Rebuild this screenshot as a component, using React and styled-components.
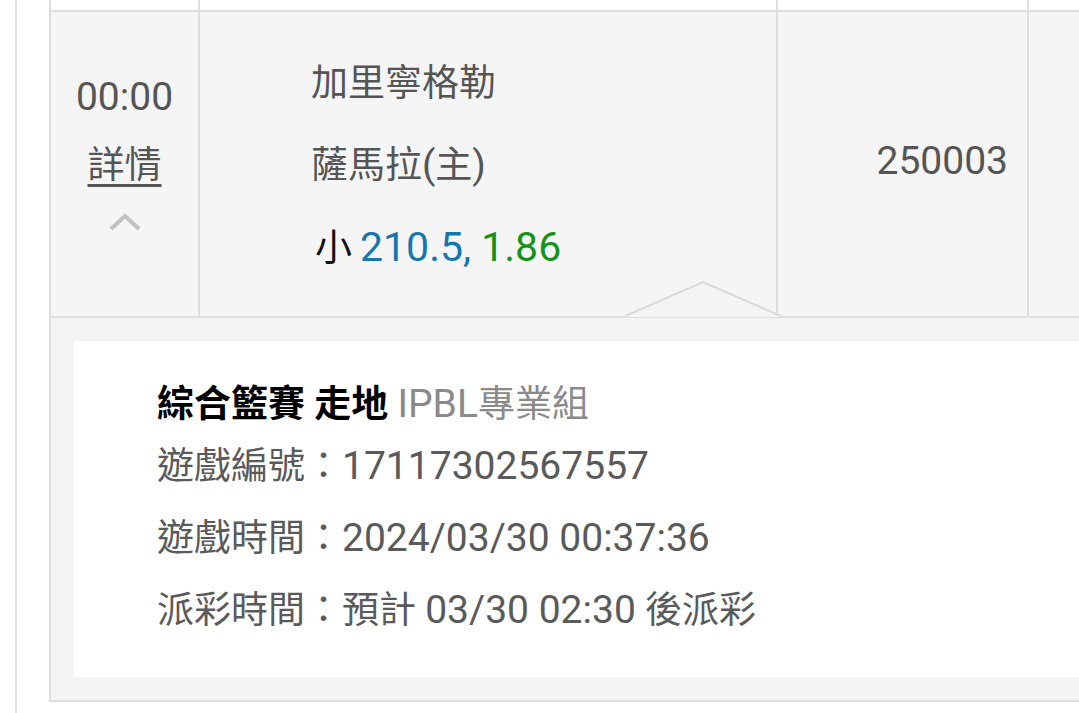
import React from "react";
import styled, { createGlobalStyle } from "styled-components";

const Global = createGlobalStyle`
  html, body { margin: 0; padding: 0; background: #ffffff; overflow: hidden; }
  body { font-family: Roboto, "Noto Sans CJK TC", sans-serif; }
`;

const Page = styled.div`
  width: 1079px;
  height: 713px;
  overflow: hidden;
  padding-left: 15px;
  box-sizing: border-box;
`;

const Frame = styled.div`
  border-left: 2px solid #e4e4e4;
  padding-left: 32px;
  height: 100%;
`;

const Table = styled.div`
  width: 1200px;
  border-left: 2px solid #dddddd;
`;

const Row = styled.div`
  position: relative;
  display: grid;
  grid-template-columns: 149px 578px 251px 1fr;
  height: ${(p) => p.$h}px;
  background: ${(p) => p.$bg};
  border-bottom: 2px solid #dedede;
`;

const Cell = styled.div`
  border-right: 2px solid #dedede;
  &:last-child { border-right: none; }
`;

/* Latin runs (digits, parentheses) are drawn a little larger than the CJK text */
const Lat = styled.span`
  font-size: 1.055em;
`;

const TimeCell = styled(Cell)`
  display: flex;
  flex-direction: column;
  align-items: center;
  padding-top: 62px;
  color: #555555;
  font-size: 37px;
`;

const Time = styled.div`
  line-height: 46px;
  font-size: 39px;
`;

const Detail = styled.a`
  margin-top: 23px;
  line-height: 46px;
  color: #555555;
  text-decoration: underline;
  text-decoration-thickness: 3px;
  text-underline-offset: 6px;
`;

const Chevron = styled.svg`
  margin-top: 23px;
  display: block;
`;

const TeamCell = styled(Cell)`
  display: flex;
  flex-direction: column;
  justify-content: center;
  gap: 35px;
  padding-left: 111px;
  padding-top: 4px;
  font-size: 37px;
  color: #555555;
`;

const Line = styled.div`
  line-height: 46px;
  white-space: nowrap;
`;

const Pick = styled.span`
  color: #111111;
  margin-left: 4px;
  margin-right: 8px;
`;

const Num = styled.span`
  color: ${(p) => p.$c};
  font-size: 41px;
`;

const IdCell = styled(Cell)`
  display: flex;
  align-items: center;
  justify-content: flex-end;
  padding-right: 19px;
  padding-bottom: 6px;
  font-size: 39px;
  color: #555555;
`;

const Notch = styled.svg`
  position: absolute;
  left: 574px;
  bottom: -2px;
  display: block;
`;

const Expand = styled.div`
  background: #f4f4f4;
  padding: 23px 0 23px 23px;
  border-bottom: 2px solid #dedede;
`;

const Card = styled.div`
  background: #ffffff;
  padding: 39px 0 42px 83px;
  font-size: 37px;
  color: #5a5a5a;
`;

const Title = styled.div`
  line-height: 48px;
  margin-bottom: 13px;
  white-space: nowrap;
`;

const Strong = styled.span`
  color: #000000;
  font-weight: 700;
`;

const Sub = styled.span`
  color: #8a8a8a;
`;

const Info = styled.div`
  line-height: 48px;
  margin-bottom: 23px;
  white-space: nowrap;
  &:last-child { margin-bottom: 0; }
`;

export default function App() {
  return (
    <>
      <Global />
      <Page>
        <Frame>
          <Table>
            <Row $h={10} $bg="#ffffff">
              <Cell />
              <Cell />
              <Cell />
              <Cell />
            </Row>
            <Row $h={304} $bg="#f5f5f5">
              <TimeCell>
                <Time>00:00</Time>
                <Detail>詳情</Detail>
                <Chevron width="34" height="20" viewBox="0 0 34 20">
                  <path d="M3 17 L17 4 L31 17" fill="none" stroke="#c2c2c2" strokeWidth="4" />
                </Chevron>
              </TimeCell>
              <TeamCell>
                <Line>加里寧格勒</Line>
                <Line>
                  薩馬拉<Lat>(</Lat>主<Lat>)</Lat>
                </Line>
                <Line>
                  <Pick>小</Pick>
                  <Num $c="#1677ae">210.5,</Num>
                  <Num $c="#14921a"> 1.86</Num>
                </Line>
              </TeamCell>
              <IdCell>250003</IdCell>
              <Cell />
              <Notch width="156" height="37" viewBox="0 0 156 37">
                <path d="M0 36 L78 2 L156 36 Z" fill="#f4f4f4" />
                <path d="M0 35 L78 1 L156 35" fill="none" stroke="#dadada" strokeWidth="2" />
              </Notch>
            </Row>
            <Expand>
              <Card>
                <Title>
                  <Strong>綜合籃賽 走地</Strong>{" "}
                  <Sub>
                    <Lat>IPBL</Lat>專業組
                  </Sub>
                </Title>
                <Info>
                  遊戲編號：<Lat>17117302567557</Lat>
                </Info>
                <Info>
                  遊戲時間：<Lat>2024/03/30 00:37:36</Lat>
                </Info>
                <Info>
                  派彩時間：預計 <Lat>03/30 02:30</Lat> 後派彩
                </Info>
              </Card>
            </Expand>
          </Table>
        </Frame>
      </Page>
    </>
  );
}
